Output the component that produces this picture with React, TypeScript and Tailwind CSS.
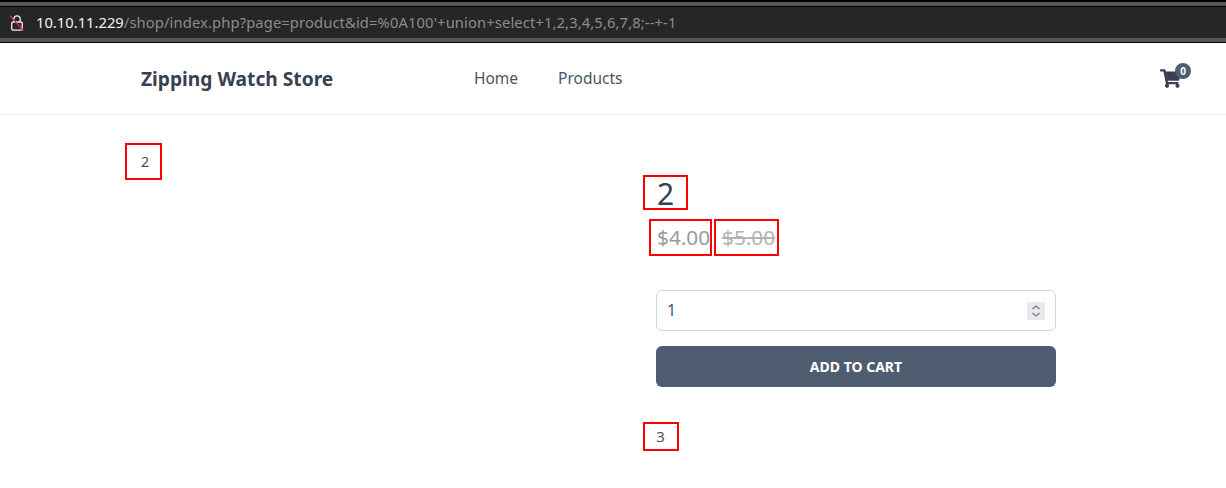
import React from 'react';

function LockIcon() {
  return (
    <svg width="16" height="18" viewBox="0 0 16 18" fill="none" className="shrink-0">
      <path d="M4.8 8V5a3.2 3.2 0 0 1 6.4 0V8" stroke="#f2f2f2" strokeWidth="1.3" />
      <rect x="2.7" y="8" width="10.6" height="8.2" rx="1.6" stroke="#f2f2f2" strokeWidth="1.3" />
      <path d="M1 2 14.5 16.5" stroke="#e0304a" strokeWidth="1.3" />
    </svg>
  );
}

function CartIcon() {
  return (
    <svg width="21" height="19" viewBox="0 0 576 512" fill="#374151">
      <path d="M528.12 301.319l47.273-208C578.806 78.301 567.391 64 551.99 64H159.208l-9.166-44.81C147.758 8.021 137.93 0 126.529 0H24C10.745 0 0 10.745 0 24v16c0 13.255 10.745 24 24 24h69.883l70.248 343.435C147.325 417.1 136 435.222 136 456c0 30.928 25.072 56 56 56s56-25.072 56-56c0-15.674-6.447-29.835-16.824-40h209.647C430.447 426.165 424 440.326 424 456c0 30.928 25.072 56 56 56s56-25.072 56-56c0-22.172-12.888-41.332-31.579-50.405l5.517-24.276c3.413-15.018-8.002-29.319-23.403-29.319H218.117l-6.545-32h293.145c11.206 0 20.92-7.754 23.403-18.681z" />
    </svg>
  );
}

export default function App() {
  return (
    <div className="min-h-[488px] bg-white font-['Noto_Sans',sans-serif] overflow-hidden">
      {/* browser address bar */}
      <div className="bg-[#262626] border-t-2 border-b border-black">
        <div className="h-1 bg-[#555555]" />
        <div className="h-[32px] border-t border-black flex items-center pl-[9px] pr-3 gap-[11px]">
          <LockIcon />
          <div className="text-[14.75px] text-[#8c8c8c] whitespace-nowrap">
            <span className="text-[#f2f2f2]">10.10.11.229</span>
            <span className="tracking-[0.11px]">/shop/index.php?page=product&amp;id=%0A100'+union+select+1,2,3,4,5,6,7,8;--+-1</span>
          </div>
        </div>
        <div className="h-1 bg-[#555555]" />
      </div>

      {/* navbar */}
      <nav className="h-[72px] border-b border-[#e9ecef] flex items-center pl-[141px] pr-[45px]">
        <span className="w-[333px] mt-px text-[19.2px] font-bold text-[#374151] whitespace-nowrap">Zipping Watch Store</span>
        <div className="flex gap-10 text-[15.5px] text-[#4b5563]">
          <span>Home</span>
          <span>Products</span>
        </div>
        <div className="relative ml-auto">
          <CartIcon />
          <span className="absolute -top-[6px] -right-[10px] w-4 h-4 rounded-full bg-[#4f5d70] text-white text-[10px] font-bold flex items-center justify-center">0</span>
        </div>
      </nav>

      {/* product */}
      <main className="grid grid-cols-[518px_413px] pl-[125px] pt-[28px]">
        <div>
          <div className="w-[37px] h-[37px] border-2 border-[#ff0000] flex items-center justify-center pl-[3px] text-[15px] text-[#4b5563]">2</div>
        </div>
        <div className="pt-[32px]">
          <div className="w-[45px] h-[35px] border-2 border-[#ff0000] pl-3 text-[30px] leading-[33px] text-[#374151]">2</div>
          <div className="flex gap-[2px] ml-[6px] mt-[9px]">
            <div className="w-[63px] h-[37px] border-2 border-[#ff0000] pl-[6px] text-[20.8px] leading-[33px] text-[#9a9a9a] whitespace-nowrap">$4.00</div>
            <div className="w-[65px] h-[37px] border-2 border-[#ff0000] pl-[6px] text-[20.8px] leading-[33px] text-[#b3b3b3] line-through whitespace-nowrap">$5.00</div>
          </div>
          <div className="ml-[13px] mt-[34px] w-[400px] h-[41px] rounded-md border border-[#d1d5db] flex items-center justify-between pl-[10px] pr-[10px] text-[16px] text-[#4a5578]">
            <span className="-mt-px">1</span>
            <span className="w-[18px] h-[18px] bg-[#e9e9ed] flex items-center justify-center">
              <svg width="10" height="14" viewBox="0 0 10 14" fill="none" stroke="#77778a" strokeWidth="1.3">
                <path d="M1.5 5 5 2l3.5 3M1.5 9 5 12l3.5-3" />
              </svg>
            </span>
          </div>
          <button className="ml-[13px] mt-[15px] block w-[400px] h-[41px] rounded-md bg-[#4f5d70] text-white text-[14px] font-bold">ADD TO CART</button>
          <div className="mt-[35px] w-[36px] h-[29px] border-2 border-[#ff0000] flex items-center justify-center pr-[1px] text-[15px] text-[#4b5563]">3</div>
        </div>
      </main>
    </div>
  );
}
